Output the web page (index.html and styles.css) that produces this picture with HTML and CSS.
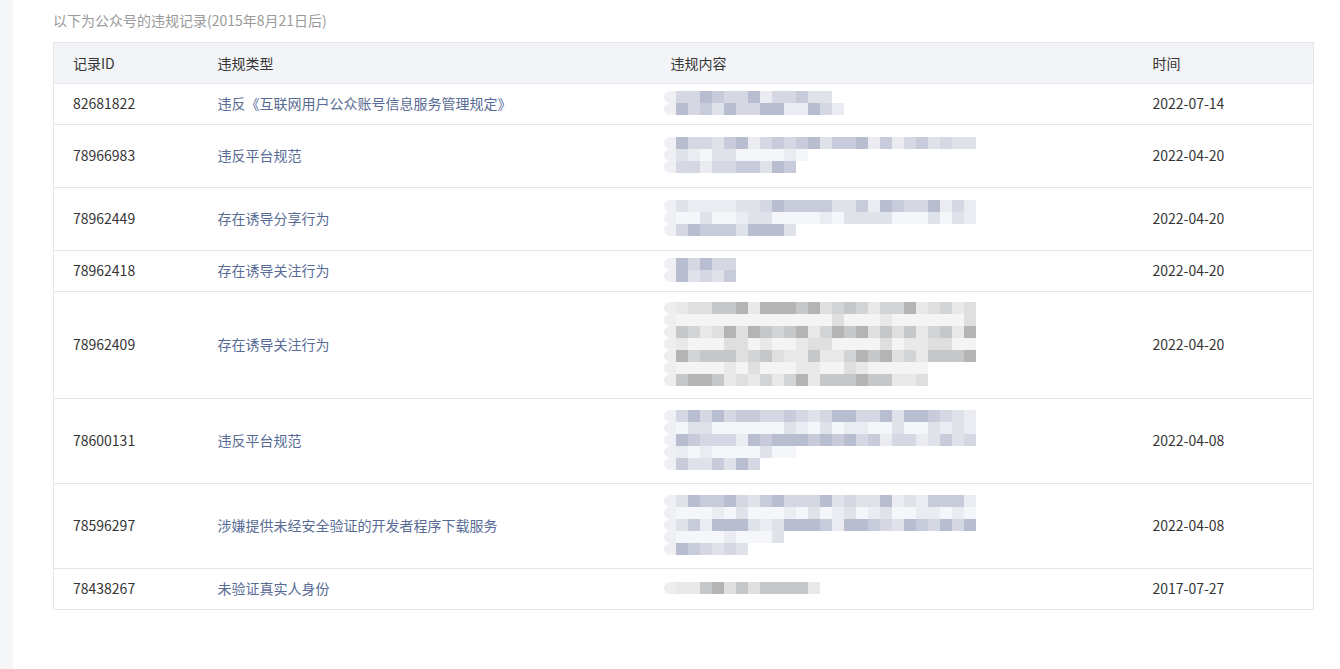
FILE: index.html
```html
<!DOCTYPE html>
<html lang="zh-CN">
<head>
<meta charset="utf-8">
<title>违规记录</title>
<link rel="stylesheet" href="styles.css">
</head>
<body>
<div class="page">
  <aside class="side"></aside>
  <main class="main">
    <p class="tips">以下为公众号的违规记录(2015年8月21日后)</p>
    <table class="table">
      <colgroup>
        <col class="c-id"><col class="c-type"><col class="c-content"><col class="c-time">
      </colgroup>
      <thead>
        <tr><th>记录ID</th><th>违规类型</th><th>违规内容</th><th>时间</th></tr>
      </thead>
      <tbody>
        <tr><td>82681822</td><td class="type">违反《互联网用户公众账号信息服务管理规定》</td><td><div class="mosaic h1" data-lines="13,14" data-tone="b"></div></td><td>2022-07-14</td></tr>
        <tr><td>78966983</td><td class="type">违反平台规范</td><td><div class="mosaic h2" data-lines="25,11,10" data-tone="b"></div></td><td>2022-04-20</td></tr>
        <tr><td>78962449</td><td class="type">存在诱导分享行为</td><td><div class="mosaic h2" data-lines="25,25,10" data-tone="b"></div></td><td>2022-04-20</td></tr>
        <tr><td>78962418</td><td class="type">存在诱导关注行为</td><td><div class="mosaic h1" data-lines="5,5" data-tone="b"></div></td><td>2022-04-20</td></tr>
        <tr><td>78962409</td><td class="type">存在诱导关注行为</td><td><div class="mosaic h4" data-lines="25,25,25,25,25,21,21" data-tone="g"></div></td><td>2022-04-20</td></tr>
        <tr><td>78600131</td><td class="type">违反平台规范</td><td><div class="mosaic h3" data-lines="25,25,25,10,7" data-tone="b"></div></td><td>2022-04-08</td></tr>
        <tr><td>78596297</td><td class="type">涉嫌提供未经安全验证的开发者程序下载服务</td><td><div class="mosaic h3" data-lines="25,25,25,9,6" data-tone="b"></div></td><td>2022-04-08</td></tr>
        <tr><td>78438267</td><td class="type">未验证真实人身份</td><td><div class="mosaic h1" data-lines="12" data-tone="g"></div></td><td>2017-07-27</td></tr>
      </tbody>
    </table>
  </main>
</div>
<script src="mosaic.js"></script>
</body>
</html>
```

FILE: styles.css
```css
* { box-sizing: border-box; }
html, body { margin: 0; padding: 0; background: #fff; }
body {
  font-family: "Noto Sans CJK SC", "Noto Sans", sans-serif;
  font-size: 14px;
  color: #353535;
}
.page { display: flex; min-height: 669px; }
.side { width: 13px; flex: none; background: #f6f7f9; }
.main { flex: 1; padding: 10px 27px 0 40px; }
.tips {
  margin: 0 0 11px;
  font-size: 14px;
  line-height: 21px;
  color: #9a9a9a;
}
.table {
  width: 1260px;
  border-collapse: collapse;
  table-layout: fixed;
  border: 1px solid #e5e6ea;
}
.c-id { width: 145px; }
.c-type { width: 453px; }
.c-content { width: 482px; }
.c-time { width: 180px; }
.table th {
  background: #f3f4f7;
  font-weight: normal;
  text-align: left;
  height: 41px;
  padding: 0 20px 1px 19px;
  line-height: 20px;
  border-bottom: 1px solid #e5e6ea;
  color: #353535;
}
.table td {
  padding: 9px 20px 11px 19px;
  line-height: 20px;
  border-bottom: 1px solid #e5e6ea;
  vertical-align: middle;
  color: #353535;
}
.table td.type { color: #576b95; }
.table td:nth-child(3) { padding-left: 12px; }

.mosaic {
  display: flex;
  flex-direction: column;
  justify-content: center;
  overflow: visible;
}
.mosaic.h1 { height: 20px; }
.mosaic.h2 { height: 42px; }
.mosaic.h3 { height: 64px; }
.mosaic.h4 { height: 86px; }
.mline { display: flex; height: 12px; flex: none; }
.mline .lead { width: 12px; height: 12px; border-radius: 6px 0 0 6px; }
.mline i { display: block; width: 12px; height: 12px; }

.b .lead { background: #eef0f4; }
.b .k0 { background: #b9bdd0; }
.b .k1 { background: #c8cbda; }
.b .k2 { background: #d5d8e3; }
.b .k3 { background: #e0e2ea; }
.b .k4 { background: #eaecf1; }
.b .k5 { background: #f5f6f9; }

.g .lead { background: #eeeeee; }
.g .k0 { background: #b4b4b4; }
.g .k1 { background: #c6c7c8; }
.g .k2 { background: #d3d4d5; }
.g .k3 { background: #dfdfe0; }
.g .k4 { background: #e9e9ea; }
.g .k5 { background: #f4f4f5; }
```

FILE: mosaic.js
```js
(function () {
  var seed = 7;
  function rnd() {
    seed = (seed * 9301 + 49297) % 233280;
    return seed / 233280;
  }
  var boxes = document.querySelectorAll('.mosaic');
  boxes.forEach(function (box) {
    var tone = box.getAttribute('data-tone');
    box.classList.add(tone);
    var lines = box.getAttribute('data-lines').split(',');
    lines.forEach(function (n, li) {
      var line = document.createElement('div');
      line.className = 'mline';
      var lead = document.createElement('span');
      lead.className = 'lead';
      line.appendChild(lead);
      var count = parseInt(n, 10);
      var light = (li % 2 === 1 && lines.length > 2);
      for (var i = 0; i < count; i++) {
        var c = document.createElement('i');
        var k = Math.floor(rnd() * 5);
        if (light) k = Math.min(5, k + 3);
        c.className = 'k' + k;
        line.appendChild(c);
      }
      box.appendChild(line);
    });
  });
})();
```
